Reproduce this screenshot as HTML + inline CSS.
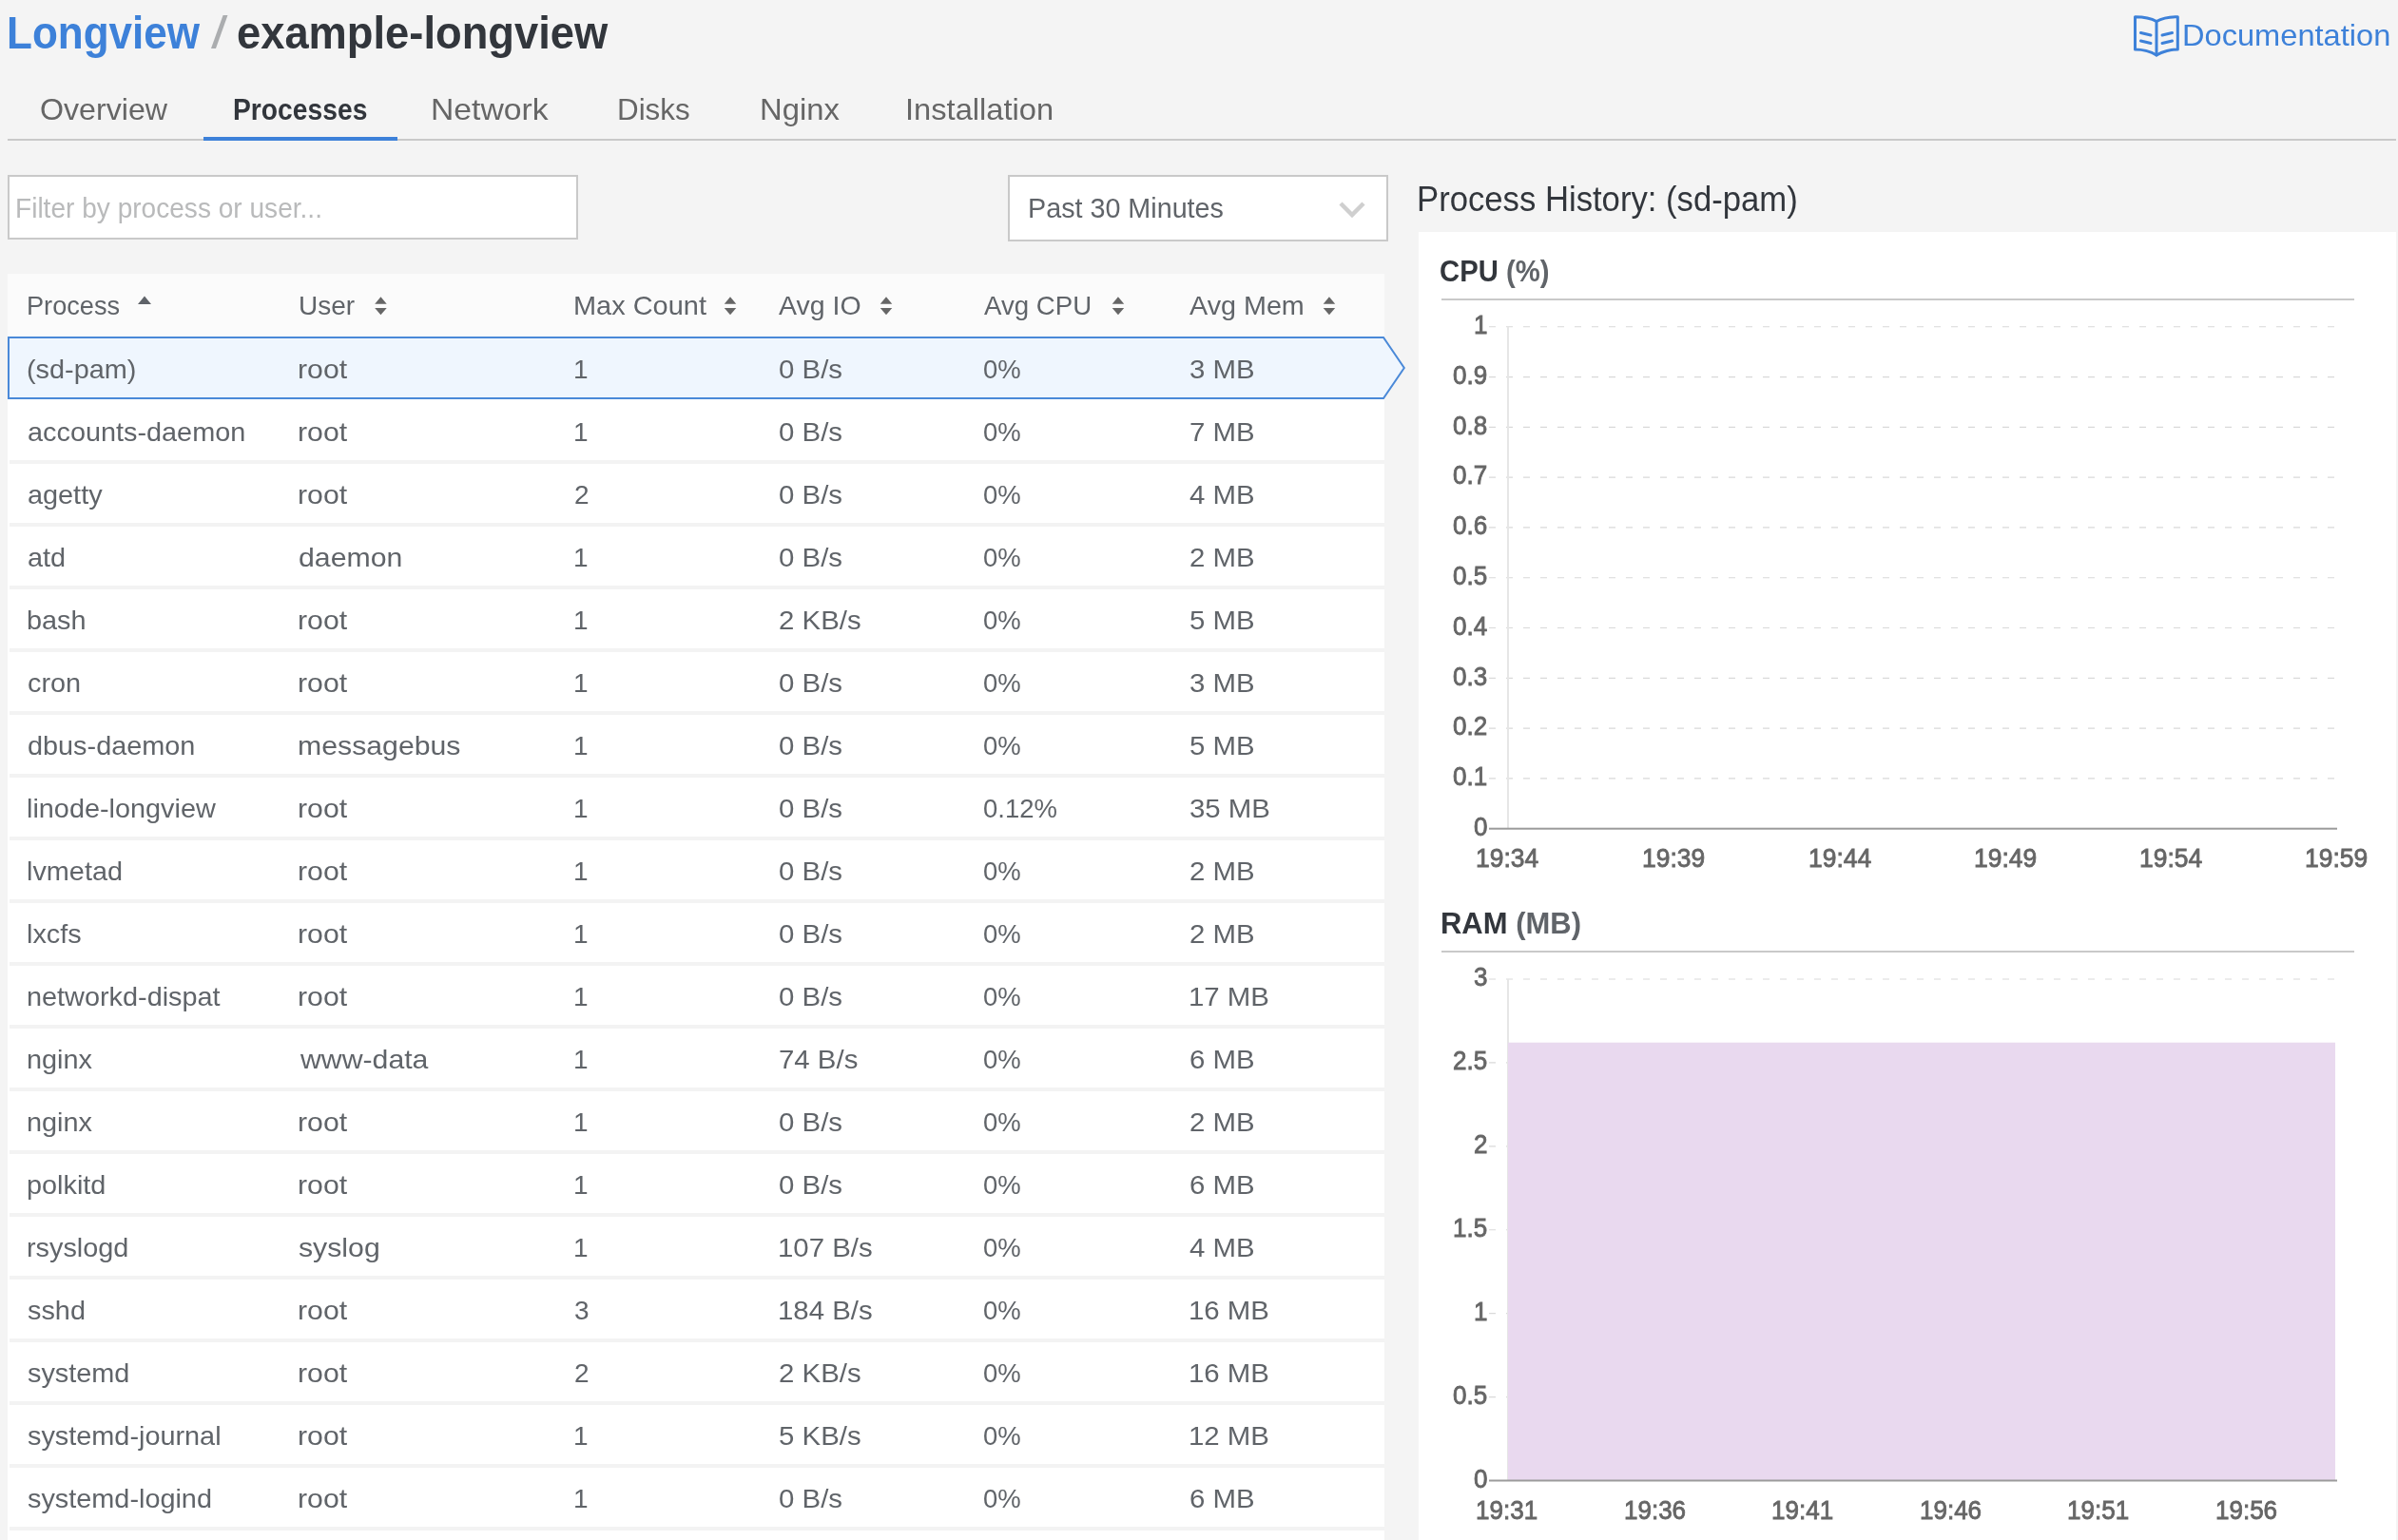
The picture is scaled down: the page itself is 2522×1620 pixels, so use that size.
<!DOCTYPE html>
<html><head><meta charset="utf-8"><title>Longview Processes</title><style>
*{margin:0;padding:0;box-sizing:border-box}
html,body{width:2522px;height:1620px;overflow:hidden}
body{background:#f4f4f4;font-family:"Liberation Sans",sans-serif;position:relative}
.b{position:absolute}
.ov{position:absolute;left:0;top:0}
.tl{position:absolute;left:0;top:0;width:2522px;height:1620px;will-change:transform}
.t{position:absolute;white-space:nowrap;line-height:1;transform-origin:0 0}
</style></head><body>
<div class="b" style="left:8px;top:146px;width:2512px;height:2px;background:#c9c9c9"></div>
<div class="b" style="left:214px;top:144px;width:204px;height:4px;background:#3d81d9"></div>
<div class="b" style="left:8px;top:184px;width:600px;height:68px;background:#fff;border:2px solid #c9c9c9"></div>
<div class="b" style="left:1060px;top:184px;width:400px;height:70px;background:#fff;border:2px solid #c9c9c9"></div>
<div class="b" style="left:1492px;top:244px;width:1028px;height:1376px;background:#fff"></div>
<div class="b" style="left:8px;top:288px;width:1448px;height:66px;background:#fbfbfb"></div>
<div class="b" style="left:8px;top:420px;width:1448px;height:1200px;background:#fff"></div>
<div class="b" style="left:10px;top:484px;width:1446px;height:4px;background:#f3f3f3"></div>
<div class="b" style="left:10px;top:550px;width:1446px;height:4px;background:#f3f3f3"></div>
<div class="b" style="left:10px;top:616px;width:1446px;height:4px;background:#f3f3f3"></div>
<div class="b" style="left:10px;top:682px;width:1446px;height:4px;background:#f3f3f3"></div>
<div class="b" style="left:10px;top:748px;width:1446px;height:4px;background:#f3f3f3"></div>
<div class="b" style="left:10px;top:814px;width:1446px;height:4px;background:#f3f3f3"></div>
<div class="b" style="left:10px;top:880px;width:1446px;height:4px;background:#f3f3f3"></div>
<div class="b" style="left:10px;top:946px;width:1446px;height:4px;background:#f3f3f3"></div>
<div class="b" style="left:10px;top:1012px;width:1446px;height:4px;background:#f3f3f3"></div>
<div class="b" style="left:10px;top:1078px;width:1446px;height:4px;background:#f3f3f3"></div>
<div class="b" style="left:10px;top:1144px;width:1446px;height:4px;background:#f3f3f3"></div>
<div class="b" style="left:10px;top:1210px;width:1446px;height:4px;background:#f3f3f3"></div>
<div class="b" style="left:10px;top:1276px;width:1446px;height:4px;background:#f3f3f3"></div>
<div class="b" style="left:10px;top:1342px;width:1446px;height:4px;background:#f3f3f3"></div>
<div class="b" style="left:10px;top:1408px;width:1446px;height:4px;background:#f3f3f3"></div>
<div class="b" style="left:10px;top:1474px;width:1446px;height:4px;background:#f3f3f3"></div>
<div class="b" style="left:10px;top:1540px;width:1446px;height:4px;background:#f3f3f3"></div>
<div class="b" style="left:10px;top:1606px;width:1446px;height:4px;background:#f3f3f3"></div>
<svg class="ov" width="2522" height="1620" viewBox="0 0 2522 1620"><polygon points="9,355 1455,355 1476.8,387 1455,419 9,419" fill="#eff6fe" stroke="#4a89d8" stroke-width="2" stroke-miterlimit="10"/><rect x="1516" y="314" width="960" height="2" fill="#c9c9c9"/><rect x="1516" y="1000" width="960" height="2" fill="#c9c9c9"/><line x1="1566" y1="343.75" x2="2457" y2="343.75" stroke="#d9d9d9" stroke-width="1.2" stroke-dasharray="7 11"/><line x1="1566" y1="396.55" x2="2457" y2="396.55" stroke="#d9d9d9" stroke-width="1.2" stroke-dasharray="7 11"/><line x1="1566" y1="449.34" x2="2457" y2="449.34" stroke="#d9d9d9" stroke-width="1.2" stroke-dasharray="7 11"/><line x1="1566" y1="502.13" x2="2457" y2="502.13" stroke="#d9d9d9" stroke-width="1.2" stroke-dasharray="7 11"/><line x1="1566" y1="554.93" x2="2457" y2="554.93" stroke="#d9d9d9" stroke-width="1.2" stroke-dasharray="7 11"/><line x1="1566" y1="607.73" x2="2457" y2="607.73" stroke="#d9d9d9" stroke-width="1.2" stroke-dasharray="7 11"/><line x1="1566" y1="660.52" x2="2457" y2="660.52" stroke="#d9d9d9" stroke-width="1.2" stroke-dasharray="7 11"/><line x1="1566" y1="713.32" x2="2457" y2="713.32" stroke="#d9d9d9" stroke-width="1.2" stroke-dasharray="7 11"/><line x1="1566" y1="766.11" x2="2457" y2="766.11" stroke="#d9d9d9" stroke-width="1.2" stroke-dasharray="7 11"/><line x1="1566" y1="818.90" x2="2457" y2="818.90" stroke="#d9d9d9" stroke-width="1.2" stroke-dasharray="7 11"/><rect x="1585" y="343.75" width="2" height="527.95" fill="#e6e6e6"/><rect x="1566" y="870.70" width="892" height="2" fill="#9b9b9b"/><line x1="1566" y1="1030.00" x2="2457" y2="1030.00" stroke="#d9d9d9" stroke-width="1.2" stroke-dasharray="7 11"/><line x1="1566" y1="1117.92" x2="2457" y2="1117.92" stroke="#d9d9d9" stroke-width="1.2" stroke-dasharray="7 11"/><line x1="1566" y1="1205.83" x2="2457" y2="1205.83" stroke="#d9d9d9" stroke-width="1.2" stroke-dasharray="7 11"/><line x1="1566" y1="1293.75" x2="2457" y2="1293.75" stroke="#d9d9d9" stroke-width="1.2" stroke-dasharray="7 11"/><line x1="1566" y1="1381.67" x2="2457" y2="1381.67" stroke="#d9d9d9" stroke-width="1.2" stroke-dasharray="7 11"/><line x1="1566" y1="1469.58" x2="2457" y2="1469.58" stroke="#d9d9d9" stroke-width="1.2" stroke-dasharray="7 11"/><rect x="1585" y="1030.00" width="2" height="527.50" fill="#e6e6e6"/><rect x="1586" y="1096.7" width="870" height="460.80" fill="#e9d9ef"/><rect x="1566" y="1556.50" width="892" height="2" fill="#9b9b9b"/><polygon points="145,320 159,320 152,311.4" fill="#5f6369"/><polygon points="394.20,319.7 406.70,319.7 400.45,312.2" fill="#666"/><polygon points="394.20,324 406.70,324 400.45,331.2" fill="#666"/><polygon points="761.75,319.7 774.25,319.7 768.00,312.2" fill="#666"/><polygon points="761.75,324 774.25,324 768.00,331.2" fill="#666"/><polygon points="925.75,319.7 938.25,319.7 932.00,312.2" fill="#666"/><polygon points="925.75,324 938.25,324 932.00,331.2" fill="#666"/><polygon points="1169.70,319.7 1182.20,319.7 1175.95,312.2" fill="#666"/><polygon points="1169.70,324 1182.20,324 1175.95,331.2" fill="#666"/><polygon points="1391.70,319.7 1404.20,319.7 1397.95,312.2" fill="#666"/><polygon points="1391.70,324 1404.20,324 1397.95,331.2" fill="#666"/><g fill="none" stroke="#3d81d9" stroke-width="3" stroke-linecap="round" stroke-linejoin="round"><path d="M2268,22.5 C2262,19 2252,17.7 2245.5,17.7 L2245.5,52 C2252,52 2262,54 2268,58 C2274,54 2284,52 2290.3,52 L2290.3,17.7 C2284,17.7 2274,19 2268,22.5 Z"/><path d="M2268,22.5 V58"/><path d="M2251.5,34.5 L2262,37 M2251.5,43 L2262,45.5 M2274,37 L2284.5,34.5 M2274,45.5 L2284.5,43"/></g><polyline points="1410,214 1422,226 1434,214" fill="none" stroke="#cfcfcf" stroke-width="4.5"/></svg>
<div class="tl"><div class="t" id="h_longview" style="left:7.48px;top:11.36px;font-size:48px;font-weight:bold;color:#3d81d9;transform:scale(0.9174,1.0000);transform-origin:0 40.64px;">Longview</div>
<div class="t" id="h_slash" style="left:222.00px;top:11.36px;font-size:48px;color:#abadaf;transform:scale(1.3077,1.0000);transform-origin:0 40.64px;">/</div>
<div class="t" id="h_example" style="left:248.89px;top:11.36px;font-size:48px;font-weight:bold;color:#32363c;transform:scale(0.9437,1.0000);transform-origin:0 40.64px;">example-longview</div>
<div class="t" id="doc" style="left:2295.45px;top:20.91px;font-size:32px;color:#3d81d9;transform:scale(1.0190,1.0000);transform-origin:0 27.09px;">Documentation</div>
<div class="t" id="tab1" style="left:41.50px;top:98.91px;font-size:32px;color:#666;transform:scale(1.0046,1.0000);transform-origin:0 27.09px;">Overview</div>
<div class="t" id="tab3" style="left:452.84px;top:98.91px;font-size:32px;color:#666;transform:scale(1.0526,1.0000);transform-origin:0 27.09px;">Network</div>
<div class="t" id="tab4" style="left:649.28px;top:98.91px;font-size:32px;color:#666;transform:scale(0.9801,1.0000);transform-origin:0 27.09px;">Disks</div>
<div class="t" id="tab5" style="left:799.43px;top:98.91px;font-size:32px;color:#666;transform:scale(1.0255,1.0000);transform-origin:0 27.09px;">Nginx</div>
<div class="t" id="tab6" style="left:951.94px;top:98.91px;font-size:32px;color:#666;transform:scale(1.0203,1.0000);transform-origin:0 27.09px;">Installation</div>
<div class="t" id="tab2" style="left:244.55px;top:98.91px;font-size:32px;font-weight:bold;color:#32363c;transform:scale(0.8828,1.0000);transform-origin:0 27.09px;">Processes</div>
<div class="t" id="filter" style="left:16.32px;top:205.45px;font-size:29px;color:#b9babb;transform:scale(0.9681,1.0000);transform-origin:0 24.55px;">Filter by process or user...</div>
<div class="t" id="range" style="left:1080.55px;top:204.70px;font-size:29px;color:#606469;transform:scale(0.9903,1.0000);transform-origin:0 24.55px;">Past 30 Minutes</div>
<div class="t" id="ph_title" style="left:1490.18px;top:191.17px;font-size:37px;color:#32363c;transform:scale(0.9372,1.0000);transform-origin:0 31.33px;">Process History: (sd-pam)</div>
<div class="t" id="th1" style="left:28.06px;top:307.54px;font-size:28px;color:#606469;transform:scale(0.9694,1.0000);transform-origin:0 23.71px;">Process</div>
<div class="t" id="th2" style="left:313.50px;top:307.54px;font-size:28px;color:#606469;transform:scale(1.0003,1.0000);transform-origin:0 23.71px;">User</div>
<div class="t" id="th3" style="left:602.68px;top:307.54px;font-size:28px;color:#606469;transform:scale(1.0336,1.0000);transform-origin:0 23.71px;">Max Count</div>
<div class="t" id="th4" style="left:818.76px;top:307.54px;font-size:28px;color:#606469;transform:scale(1.0179,1.0000);transform-origin:0 23.71px;">Avg IO</div>
<div class="t" id="th5" style="left:1035.00px;top:307.54px;font-size:28px;color:#606469;transform:scale(0.9868,1.0000);transform-origin:0 23.71px;">Avg CPU</div>
<div class="t" id="th6" style="left:1251.11px;top:307.54px;font-size:28px;color:#606469;transform:scale(1.0259,1.0000);transform-origin:0 23.71px;">Avg Mem</div>
<div class="t" id="r0c0" style="left:27.94px;top:374.69px;font-size:28px;color:#606469;transform:scale(1.0300,1.0000);transform-origin:0 23.71px;">(sd-pam)</div>
<div class="t" id="r0c1" style="left:313.38px;top:374.69px;font-size:28px;color:#606469;transform:scale(1.0800,1.0000);transform-origin:0 23.71px;">root</div>
<div class="t" id="r0c2" style="left:603.00px;top:374.69px;font-size:28px;color:#606469;">1</div>
<div class="t" id="r0c3" style="left:818.69px;top:374.69px;font-size:28px;color:#606469;transform:scale(1.0500,1.0000);transform-origin:0 23.71px;">0 B/s</div>
<div class="t" id="r0c4" style="left:1034.02px;top:374.69px;font-size:28px;color:#606469;transform:scale(0.9800,1.0000);transform-origin:0 23.71px;">0%</div>
<div class="t" id="r0c5" style="left:1250.95px;top:374.69px;font-size:28px;color:#606469;transform:scale(1.0500,1.0000);transform-origin:0 23.71px;">3 MB</div>
<div class="t" id="r1c0" style="left:28.97px;top:440.69px;font-size:28px;color:#606469;transform:scale(1.0300,1.0000);transform-origin:0 23.71px;">accounts-daemon</div>
<div class="t" id="r1c1" style="left:313.38px;top:440.69px;font-size:28px;color:#606469;transform:scale(1.0800,1.0000);transform-origin:0 23.71px;">root</div>
<div class="t" id="r1c2" style="left:603.00px;top:440.69px;font-size:28px;color:#606469;">1</div>
<div class="t" id="r1c3" style="left:818.69px;top:440.69px;font-size:28px;color:#606469;transform:scale(1.0500,1.0000);transform-origin:0 23.71px;">0 B/s</div>
<div class="t" id="r1c4" style="left:1034.02px;top:440.69px;font-size:28px;color:#606469;transform:scale(0.9800,1.0000);transform-origin:0 23.71px;">0%</div>
<div class="t" id="r1c5" style="left:1250.95px;top:440.69px;font-size:28px;color:#606469;transform:scale(1.0500,1.0000);transform-origin:0 23.71px;">7 MB</div>
<div class="t" id="r2c0" style="left:28.97px;top:506.69px;font-size:28px;color:#606469;transform:scale(1.0300,1.0000);transform-origin:0 23.71px;">agetty</div>
<div class="t" id="r2c1" style="left:313.38px;top:506.69px;font-size:28px;color:#606469;transform:scale(1.0800,1.0000);transform-origin:0 23.71px;">root</div>
<div class="t" id="r2c2" style="left:604.00px;top:506.69px;font-size:28px;color:#606469;">2</div>
<div class="t" id="r2c3" style="left:818.69px;top:506.69px;font-size:28px;color:#606469;transform:scale(1.0500,1.0000);transform-origin:0 23.71px;">0 B/s</div>
<div class="t" id="r2c4" style="left:1034.02px;top:506.69px;font-size:28px;color:#606469;transform:scale(0.9800,1.0000);transform-origin:0 23.71px;">0%</div>
<div class="t" id="r2c5" style="left:1250.95px;top:506.69px;font-size:28px;color:#606469;transform:scale(1.0500,1.0000);transform-origin:0 23.71px;">4 MB</div>
<div class="t" id="r3c0" style="left:28.97px;top:572.69px;font-size:28px;color:#606469;transform:scale(1.0300,1.0000);transform-origin:0 23.71px;">atd</div>
<div class="t" id="r3c1" style="left:314.38px;top:572.69px;font-size:28px;color:#606469;transform:scale(1.0800,1.0000);transform-origin:0 23.71px;">daemon</div>
<div class="t" id="r3c2" style="left:603.00px;top:572.69px;font-size:28px;color:#606469;">1</div>
<div class="t" id="r3c3" style="left:818.69px;top:572.69px;font-size:28px;color:#606469;transform:scale(1.0500,1.0000);transform-origin:0 23.71px;">0 B/s</div>
<div class="t" id="r3c4" style="left:1034.02px;top:572.69px;font-size:28px;color:#606469;transform:scale(0.9800,1.0000);transform-origin:0 23.71px;">0%</div>
<div class="t" id="r3c5" style="left:1250.95px;top:572.69px;font-size:28px;color:#606469;transform:scale(1.0500,1.0000);transform-origin:0 23.71px;">2 MB</div>
<div class="t" id="r4c0" style="left:27.94px;top:638.69px;font-size:28px;color:#606469;transform:scale(1.0300,1.0000);transform-origin:0 23.71px;">bash</div>
<div class="t" id="r4c1" style="left:313.38px;top:638.69px;font-size:28px;color:#606469;transform:scale(1.0800,1.0000);transform-origin:0 23.71px;">root</div>
<div class="t" id="r4c2" style="left:603.00px;top:638.69px;font-size:28px;color:#606469;">1</div>
<div class="t" id="r4c3" style="left:818.69px;top:638.69px;font-size:28px;color:#606469;transform:scale(1.0500,1.0000);transform-origin:0 23.71px;">2 KB/s</div>
<div class="t" id="r4c4" style="left:1034.02px;top:638.69px;font-size:28px;color:#606469;transform:scale(0.9800,1.0000);transform-origin:0 23.71px;">0%</div>
<div class="t" id="r4c5" style="left:1250.95px;top:638.69px;font-size:28px;color:#606469;transform:scale(1.0500,1.0000);transform-origin:0 23.71px;">5 MB</div>
<div class="t" id="r5c0" style="left:28.97px;top:704.69px;font-size:28px;color:#606469;transform:scale(1.0300,1.0000);transform-origin:0 23.71px;">cron</div>
<div class="t" id="r5c1" style="left:313.38px;top:704.69px;font-size:28px;color:#606469;transform:scale(1.0800,1.0000);transform-origin:0 23.71px;">root</div>
<div class="t" id="r5c2" style="left:603.00px;top:704.69px;font-size:28px;color:#606469;">1</div>
<div class="t" id="r5c3" style="left:818.69px;top:704.69px;font-size:28px;color:#606469;transform:scale(1.0500,1.0000);transform-origin:0 23.71px;">0 B/s</div>
<div class="t" id="r5c4" style="left:1034.02px;top:704.69px;font-size:28px;color:#606469;transform:scale(0.9800,1.0000);transform-origin:0 23.71px;">0%</div>
<div class="t" id="r5c5" style="left:1250.95px;top:704.69px;font-size:28px;color:#606469;transform:scale(1.0500,1.0000);transform-origin:0 23.71px;">3 MB</div>
<div class="t" id="r6c0" style="left:28.97px;top:770.69px;font-size:28px;color:#606469;transform:scale(1.0300,1.0000);transform-origin:0 23.71px;">dbus-daemon</div>
<div class="t" id="r6c1" style="left:313.38px;top:770.69px;font-size:28px;color:#606469;transform:scale(1.0800,1.0000);transform-origin:0 23.71px;">messagebus</div>
<div class="t" id="r6c2" style="left:603.00px;top:770.69px;font-size:28px;color:#606469;">1</div>
<div class="t" id="r6c3" style="left:818.69px;top:770.69px;font-size:28px;color:#606469;transform:scale(1.0500,1.0000);transform-origin:0 23.71px;">0 B/s</div>
<div class="t" id="r6c4" style="left:1034.02px;top:770.69px;font-size:28px;color:#606469;transform:scale(0.9800,1.0000);transform-origin:0 23.71px;">0%</div>
<div class="t" id="r6c5" style="left:1250.95px;top:770.69px;font-size:28px;color:#606469;transform:scale(1.0500,1.0000);transform-origin:0 23.71px;">5 MB</div>
<div class="t" id="r7c0" style="left:27.94px;top:836.69px;font-size:28px;color:#606469;transform:scale(1.0300,1.0000);transform-origin:0 23.71px;">linode-longview</div>
<div class="t" id="r7c1" style="left:313.38px;top:836.69px;font-size:28px;color:#606469;transform:scale(1.0800,1.0000);transform-origin:0 23.71px;">root</div>
<div class="t" id="r7c2" style="left:603.00px;top:836.69px;font-size:28px;color:#606469;">1</div>
<div class="t" id="r7c3" style="left:818.69px;top:836.69px;font-size:28px;color:#606469;transform:scale(1.0500,1.0000);transform-origin:0 23.71px;">0 B/s</div>
<div class="t" id="r7c4" style="left:1034.02px;top:836.69px;font-size:28px;color:#606469;transform:scale(0.9800,1.0000);transform-origin:0 23.71px;">0.12%</div>
<div class="t" id="r7c5" style="left:1250.95px;top:836.69px;font-size:28px;color:#606469;transform:scale(1.0500,1.0000);transform-origin:0 23.71px;">35 MB</div>
<div class="t" id="r8c0" style="left:27.94px;top:902.69px;font-size:28px;color:#606469;transform:scale(1.0300,1.0000);transform-origin:0 23.71px;">lvmetad</div>
<div class="t" id="r8c1" style="left:313.38px;top:902.69px;font-size:28px;color:#606469;transform:scale(1.0800,1.0000);transform-origin:0 23.71px;">root</div>
<div class="t" id="r8c2" style="left:603.00px;top:902.69px;font-size:28px;color:#606469;">1</div>
<div class="t" id="r8c3" style="left:818.69px;top:902.69px;font-size:28px;color:#606469;transform:scale(1.0500,1.0000);transform-origin:0 23.71px;">0 B/s</div>
<div class="t" id="r8c4" style="left:1034.02px;top:902.69px;font-size:28px;color:#606469;transform:scale(0.9800,1.0000);transform-origin:0 23.71px;">0%</div>
<div class="t" id="r8c5" style="left:1250.95px;top:902.69px;font-size:28px;color:#606469;transform:scale(1.0500,1.0000);transform-origin:0 23.71px;">2 MB</div>
<div class="t" id="r9c0" style="left:27.94px;top:968.69px;font-size:28px;color:#606469;transform:scale(1.0300,1.0000);transform-origin:0 23.71px;">lxcfs</div>
<div class="t" id="r9c1" style="left:313.38px;top:968.69px;font-size:28px;color:#606469;transform:scale(1.0800,1.0000);transform-origin:0 23.71px;">root</div>
<div class="t" id="r9c2" style="left:603.00px;top:968.69px;font-size:28px;color:#606469;">1</div>
<div class="t" id="r9c3" style="left:818.69px;top:968.69px;font-size:28px;color:#606469;transform:scale(1.0500,1.0000);transform-origin:0 23.71px;">0 B/s</div>
<div class="t" id="r9c4" style="left:1034.02px;top:968.69px;font-size:28px;color:#606469;transform:scale(0.9800,1.0000);transform-origin:0 23.71px;">0%</div>
<div class="t" id="r9c5" style="left:1250.95px;top:968.69px;font-size:28px;color:#606469;transform:scale(1.0500,1.0000);transform-origin:0 23.71px;">2 MB</div>
<div class="t" id="r10c0" style="left:27.94px;top:1034.69px;font-size:28px;color:#606469;transform:scale(1.0300,1.0000);transform-origin:0 23.71px;">networkd-dispat</div>
<div class="t" id="r10c1" style="left:313.38px;top:1034.69px;font-size:28px;color:#606469;transform:scale(1.0800,1.0000);transform-origin:0 23.71px;">root</div>
<div class="t" id="r10c2" style="left:603.00px;top:1034.69px;font-size:28px;color:#606469;">1</div>
<div class="t" id="r10c3" style="left:818.69px;top:1034.69px;font-size:28px;color:#606469;transform:scale(1.0500,1.0000);transform-origin:0 23.71px;">0 B/s</div>
<div class="t" id="r10c4" style="left:1034.02px;top:1034.69px;font-size:28px;color:#606469;transform:scale(0.9800,1.0000);transform-origin:0 23.71px;">0%</div>
<div class="t" id="r10c5" style="left:1249.90px;top:1034.69px;font-size:28px;color:#606469;transform:scale(1.0500,1.0000);transform-origin:0 23.71px;">17 MB</div>
<div class="t" id="r11c0" style="left:27.94px;top:1100.69px;font-size:28px;color:#606469;transform:scale(1.0300,1.0000);transform-origin:0 23.71px;">nginx</div>
<div class="t" id="r11c1" style="left:315.54px;top:1100.69px;font-size:28px;color:#606469;transform:scale(1.0800,1.0000);transform-origin:0 23.71px;">www-data</div>
<div class="t" id="r11c2" style="left:603.00px;top:1100.69px;font-size:28px;color:#606469;">1</div>
<div class="t" id="r11c3" style="left:818.69px;top:1100.69px;font-size:28px;color:#606469;transform:scale(1.0500,1.0000);transform-origin:0 23.71px;">74 B/s</div>
<div class="t" id="r11c4" style="left:1034.02px;top:1100.69px;font-size:28px;color:#606469;transform:scale(0.9800,1.0000);transform-origin:0 23.71px;">0%</div>
<div class="t" id="r11c5" style="left:1250.95px;top:1100.69px;font-size:28px;color:#606469;transform:scale(1.0500,1.0000);transform-origin:0 23.71px;">6 MB</div>
<div class="t" id="r12c0" style="left:27.94px;top:1166.69px;font-size:28px;color:#606469;transform:scale(1.0300,1.0000);transform-origin:0 23.71px;">nginx</div>
<div class="t" id="r12c1" style="left:313.38px;top:1166.69px;font-size:28px;color:#606469;transform:scale(1.0800,1.0000);transform-origin:0 23.71px;">root</div>
<div class="t" id="r12c2" style="left:603.00px;top:1166.69px;font-size:28px;color:#606469;">1</div>
<div class="t" id="r12c3" style="left:818.69px;top:1166.69px;font-size:28px;color:#606469;transform:scale(1.0500,1.0000);transform-origin:0 23.71px;">0 B/s</div>
<div class="t" id="r12c4" style="left:1034.02px;top:1166.69px;font-size:28px;color:#606469;transform:scale(0.9800,1.0000);transform-origin:0 23.71px;">0%</div>
<div class="t" id="r12c5" style="left:1250.95px;top:1166.69px;font-size:28px;color:#606469;transform:scale(1.0500,1.0000);transform-origin:0 23.71px;">2 MB</div>
<div class="t" id="r13c0" style="left:27.94px;top:1232.69px;font-size:28px;color:#606469;transform:scale(1.0300,1.0000);transform-origin:0 23.71px;">polkitd</div>
<div class="t" id="r13c1" style="left:313.38px;top:1232.69px;font-size:28px;color:#606469;transform:scale(1.0800,1.0000);transform-origin:0 23.71px;">root</div>
<div class="t" id="r13c2" style="left:603.00px;top:1232.69px;font-size:28px;color:#606469;">1</div>
<div class="t" id="r13c3" style="left:818.69px;top:1232.69px;font-size:28px;color:#606469;transform:scale(1.0500,1.0000);transform-origin:0 23.71px;">0 B/s</div>
<div class="t" id="r13c4" style="left:1034.02px;top:1232.69px;font-size:28px;color:#606469;transform:scale(0.9800,1.0000);transform-origin:0 23.71px;">0%</div>
<div class="t" id="r13c5" style="left:1250.95px;top:1232.69px;font-size:28px;color:#606469;transform:scale(1.0500,1.0000);transform-origin:0 23.71px;">6 MB</div>
<div class="t" id="r14c0" style="left:27.94px;top:1298.69px;font-size:28px;color:#606469;transform:scale(1.0300,1.0000);transform-origin:0 23.71px;">rsyslogd</div>
<div class="t" id="r14c1" style="left:314.46px;top:1298.69px;font-size:28px;color:#606469;transform:scale(1.0800,1.0000);transform-origin:0 23.71px;">syslog</div>
<div class="t" id="r14c2" style="left:603.00px;top:1298.69px;font-size:28px;color:#606469;">1</div>
<div class="t" id="r14c3" style="left:817.64px;top:1298.69px;font-size:28px;color:#606469;transform:scale(1.0500,1.0000);transform-origin:0 23.71px;">107 B/s</div>
<div class="t" id="r14c4" style="left:1034.02px;top:1298.69px;font-size:28px;color:#606469;transform:scale(0.9800,1.0000);transform-origin:0 23.71px;">0%</div>
<div class="t" id="r14c5" style="left:1250.95px;top:1298.69px;font-size:28px;color:#606469;transform:scale(1.0500,1.0000);transform-origin:0 23.71px;">4 MB</div>
<div class="t" id="r15c0" style="left:28.97px;top:1364.69px;font-size:28px;color:#606469;transform:scale(1.0300,1.0000);transform-origin:0 23.71px;">sshd</div>
<div class="t" id="r15c1" style="left:313.38px;top:1364.69px;font-size:28px;color:#606469;transform:scale(1.0800,1.0000);transform-origin:0 23.71px;">root</div>
<div class="t" id="r15c2" style="left:604.00px;top:1364.69px;font-size:28px;color:#606469;">3</div>
<div class="t" id="r15c3" style="left:817.64px;top:1364.69px;font-size:28px;color:#606469;transform:scale(1.0500,1.0000);transform-origin:0 23.71px;">184 B/s</div>
<div class="t" id="r15c4" style="left:1034.02px;top:1364.69px;font-size:28px;color:#606469;transform:scale(0.9800,1.0000);transform-origin:0 23.71px;">0%</div>
<div class="t" id="r15c5" style="left:1249.90px;top:1364.69px;font-size:28px;color:#606469;transform:scale(1.0500,1.0000);transform-origin:0 23.71px;">16 MB</div>
<div class="t" id="r16c0" style="left:28.97px;top:1430.69px;font-size:28px;color:#606469;transform:scale(1.0300,1.0000);transform-origin:0 23.71px;">systemd</div>
<div class="t" id="r16c1" style="left:313.38px;top:1430.69px;font-size:28px;color:#606469;transform:scale(1.0800,1.0000);transform-origin:0 23.71px;">root</div>
<div class="t" id="r16c2" style="left:604.00px;top:1430.69px;font-size:28px;color:#606469;">2</div>
<div class="t" id="r16c3" style="left:818.69px;top:1430.69px;font-size:28px;color:#606469;transform:scale(1.0500,1.0000);transform-origin:0 23.71px;">2 KB/s</div>
<div class="t" id="r16c4" style="left:1034.02px;top:1430.69px;font-size:28px;color:#606469;transform:scale(0.9800,1.0000);transform-origin:0 23.71px;">0%</div>
<div class="t" id="r16c5" style="left:1249.90px;top:1430.69px;font-size:28px;color:#606469;transform:scale(1.0500,1.0000);transform-origin:0 23.71px;">16 MB</div>
<div class="t" id="r17c0" style="left:28.97px;top:1496.69px;font-size:28px;color:#606469;transform:scale(1.0300,1.0000);transform-origin:0 23.71px;">systemd-journal</div>
<div class="t" id="r17c1" style="left:313.38px;top:1496.69px;font-size:28px;color:#606469;transform:scale(1.0800,1.0000);transform-origin:0 23.71px;">root</div>
<div class="t" id="r17c2" style="left:603.00px;top:1496.69px;font-size:28px;color:#606469;">1</div>
<div class="t" id="r17c3" style="left:818.69px;top:1496.69px;font-size:28px;color:#606469;transform:scale(1.0500,1.0000);transform-origin:0 23.71px;">5 KB/s</div>
<div class="t" id="r17c4" style="left:1034.02px;top:1496.69px;font-size:28px;color:#606469;transform:scale(0.9800,1.0000);transform-origin:0 23.71px;">0%</div>
<div class="t" id="r17c5" style="left:1249.90px;top:1496.69px;font-size:28px;color:#606469;transform:scale(1.0500,1.0000);transform-origin:0 23.71px;">12 MB</div>
<div class="t" id="r18c0" style="left:28.97px;top:1562.69px;font-size:28px;color:#606469;transform:scale(1.0300,1.0000);transform-origin:0 23.71px;">systemd-logind</div>
<div class="t" id="r18c1" style="left:313.38px;top:1562.69px;font-size:28px;color:#606469;transform:scale(1.0800,1.0000);transform-origin:0 23.71px;">root</div>
<div class="t" id="r18c2" style="left:603.00px;top:1562.69px;font-size:28px;color:#606469;">1</div>
<div class="t" id="r18c3" style="left:818.69px;top:1562.69px;font-size:28px;color:#606469;transform:scale(1.0500,1.0000);transform-origin:0 23.71px;">0 B/s</div>
<div class="t" id="r18c4" style="left:1034.02px;top:1562.69px;font-size:28px;color:#606469;transform:scale(0.9800,1.0000);transform-origin:0 23.71px;">0%</div>
<div class="t" id="r18c5" style="left:1250.95px;top:1562.69px;font-size:28px;color:#606469;transform:scale(1.0500,1.0000);transform-origin:0 23.71px;">6 MB</div>
<div class="t" id="cpu_title" style="left:1514.37px;top:268.66px;font-size:32px;font-weight:bold;color:#32363c;transform:scale(0.9154,1.0000);transform-origin:0 27.09px;">CPU <span style="color:#606469">(%)</span></div>
<div class="t" id="ram_title" style="left:1515.05px;top:955.41px;font-size:32px;font-weight:bold;color:#32363c;transform:scale(0.9680,1.0000);transform-origin:0 27.09px;">RAM <span style="color:#606469">(MB)</span></div>
<div class="t" id="cpu_y0" style="left:1550.00px;top:328.94px;font-size:26px;color:#666;-webkit-text-stroke:0.8px currentColor;transform:scale(1.0000,1.0700);transform-origin:0 22.01px;">1</div>
<div class="t" id="cpu_y1" style="left:1528.00px;top:381.73px;font-size:26px;color:#666;-webkit-text-stroke:0.8px currentColor;transform:scale(1.0000,1.0700);transform-origin:0 22.01px;">0.9</div>
<div class="t" id="cpu_y2" style="left:1528.00px;top:434.53px;font-size:26px;color:#666;-webkit-text-stroke:0.8px currentColor;transform:scale(1.0000,1.0700);transform-origin:0 22.01px;">0.8</div>
<div class="t" id="cpu_y3" style="left:1528.00px;top:487.32px;font-size:26px;color:#666;-webkit-text-stroke:0.8px currentColor;transform:scale(1.0000,1.0700);transform-origin:0 22.01px;">0.7</div>
<div class="t" id="cpu_y4" style="left:1528.00px;top:540.12px;font-size:26px;color:#666;-webkit-text-stroke:0.8px currentColor;transform:scale(1.0000,1.0700);transform-origin:0 22.01px;">0.6</div>
<div class="t" id="cpu_y5" style="left:1528.00px;top:592.91px;font-size:26px;color:#666;-webkit-text-stroke:0.8px currentColor;transform:scale(1.0000,1.0700);transform-origin:0 22.01px;">0.5</div>
<div class="t" id="cpu_y6" style="left:1528.00px;top:645.71px;font-size:26px;color:#666;-webkit-text-stroke:0.8px currentColor;transform:scale(1.0000,1.0700);transform-origin:0 22.01px;">0.4</div>
<div class="t" id="cpu_y7" style="left:1528.00px;top:698.50px;font-size:26px;color:#666;-webkit-text-stroke:0.8px currentColor;transform:scale(1.0000,1.0700);transform-origin:0 22.01px;">0.3</div>
<div class="t" id="cpu_y8" style="left:1528.00px;top:751.30px;font-size:26px;color:#666;-webkit-text-stroke:0.8px currentColor;transform:scale(1.0000,1.0700);transform-origin:0 22.01px;">0.2</div>
<div class="t" id="cpu_y9" style="left:1528.00px;top:804.09px;font-size:26px;color:#666;-webkit-text-stroke:0.8px currentColor;transform:scale(1.0000,1.0700);transform-origin:0 22.01px;">0.1</div>
<div class="t" id="cpu_y10" style="left:1550.00px;top:856.89px;font-size:26px;color:#666;-webkit-text-stroke:0.8px currentColor;transform:scale(1.0000,1.0700);transform-origin:0 22.01px;">0</div>
<div class="t" id="cpu_x0" style="left:1552.48px;top:890.49px;font-size:26px;color:#666;-webkit-text-stroke:0.8px currentColor;transform:scale(1.0158,1.0700);transform-origin:0 22.01px;">19:34</div>
<div class="t" id="cpu_x1" style="left:1726.57px;top:890.49px;font-size:26px;color:#666;-webkit-text-stroke:0.8px currentColor;transform:scale(1.0158,1.0700);transform-origin:0 22.01px;">19:39</div>
<div class="t" id="cpu_x2" style="left:1901.66px;top:890.49px;font-size:26px;color:#666;-webkit-text-stroke:0.8px currentColor;transform:scale(1.0158,1.0700);transform-origin:0 22.01px;">19:44</div>
<div class="t" id="cpu_x3" style="left:2075.74px;top:890.49px;font-size:26px;color:#666;-webkit-text-stroke:0.8px currentColor;transform:scale(1.0158,1.0700);transform-origin:0 22.01px;">19:49</div>
<div class="t" id="cpu_x4" style="left:2249.87px;top:890.49px;font-size:26px;color:#666;-webkit-text-stroke:0.8px currentColor;transform:scale(1.0158,1.0700);transform-origin:0 22.01px;">19:54</div>
<div class="t" id="cpu_x5" style="left:2423.97px;top:890.49px;font-size:26px;color:#666;-webkit-text-stroke:0.8px currentColor;transform:scale(1.0158,1.0700);transform-origin:0 22.01px;">19:59</div>
<div class="t" id="ram_y0" style="left:1550.00px;top:1015.19px;font-size:26px;color:#666;-webkit-text-stroke:0.8px currentColor;transform:scale(1.0000,1.0700);transform-origin:0 22.01px;">3</div>
<div class="t" id="ram_y1" style="left:1528.00px;top:1103.10px;font-size:26px;color:#666;-webkit-text-stroke:0.8px currentColor;transform:scale(1.0000,1.0700);transform-origin:0 22.01px;">2.5</div>
<div class="t" id="ram_y2" style="left:1550.00px;top:1191.02px;font-size:26px;color:#666;-webkit-text-stroke:0.8px currentColor;transform:scale(1.0000,1.0700);transform-origin:0 22.01px;">2</div>
<div class="t" id="ram_y3" style="left:1528.00px;top:1278.94px;font-size:26px;color:#666;-webkit-text-stroke:0.8px currentColor;transform:scale(1.0000,1.0700);transform-origin:0 22.01px;">1.5</div>
<div class="t" id="ram_y4" style="left:1550.00px;top:1366.85px;font-size:26px;color:#666;-webkit-text-stroke:0.8px currentColor;transform:scale(1.0000,1.0700);transform-origin:0 22.01px;">1</div>
<div class="t" id="ram_y5" style="left:1528.00px;top:1454.77px;font-size:26px;color:#666;-webkit-text-stroke:0.8px currentColor;transform:scale(1.0000,1.0700);transform-origin:0 22.01px;">0.5</div>
<div class="t" id="ram_y6" style="left:1550.00px;top:1542.69px;font-size:26px;color:#666;-webkit-text-stroke:0.8px currentColor;transform:scale(1.0000,1.0700);transform-origin:0 22.01px;">0</div>
<div class="t" id="ram_x0" style="left:1552.19px;top:1576.29px;font-size:26px;color:#666;-webkit-text-stroke:0.8px currentColor;transform:scale(1.0005,1.0700);transform-origin:0 22.01px;">19:31</div>
<div class="t" id="ram_x1" style="left:1707.70px;top:1576.29px;font-size:26px;color:#666;-webkit-text-stroke:0.8px currentColor;transform:scale(1.0002,1.0700);transform-origin:0 22.01px;">19:36</div>
<div class="t" id="ram_x2" style="left:1863.19px;top:1576.29px;font-size:26px;color:#666;-webkit-text-stroke:0.8px currentColor;transform:scale(1.0005,1.0700);transform-origin:0 22.01px;">19:41</div>
<div class="t" id="ram_x3" style="left:2018.70px;top:1576.29px;font-size:26px;color:#666;-webkit-text-stroke:0.8px currentColor;transform:scale(1.0002,1.0700);transform-origin:0 22.01px;">19:46</div>
<div class="t" id="ram_x4" style="left:2174.19px;top:1576.29px;font-size:26px;color:#666;-webkit-text-stroke:0.8px currentColor;transform:scale(1.0005,1.0700);transform-origin:0 22.01px;">19:51</div>
<div class="t" id="ram_x5" style="left:2329.70px;top:1576.29px;font-size:26px;color:#666;-webkit-text-stroke:0.8px currentColor;transform:scale(1.0002,1.0700);transform-origin:0 22.01px;">19:56</div></div>
</body></html>
